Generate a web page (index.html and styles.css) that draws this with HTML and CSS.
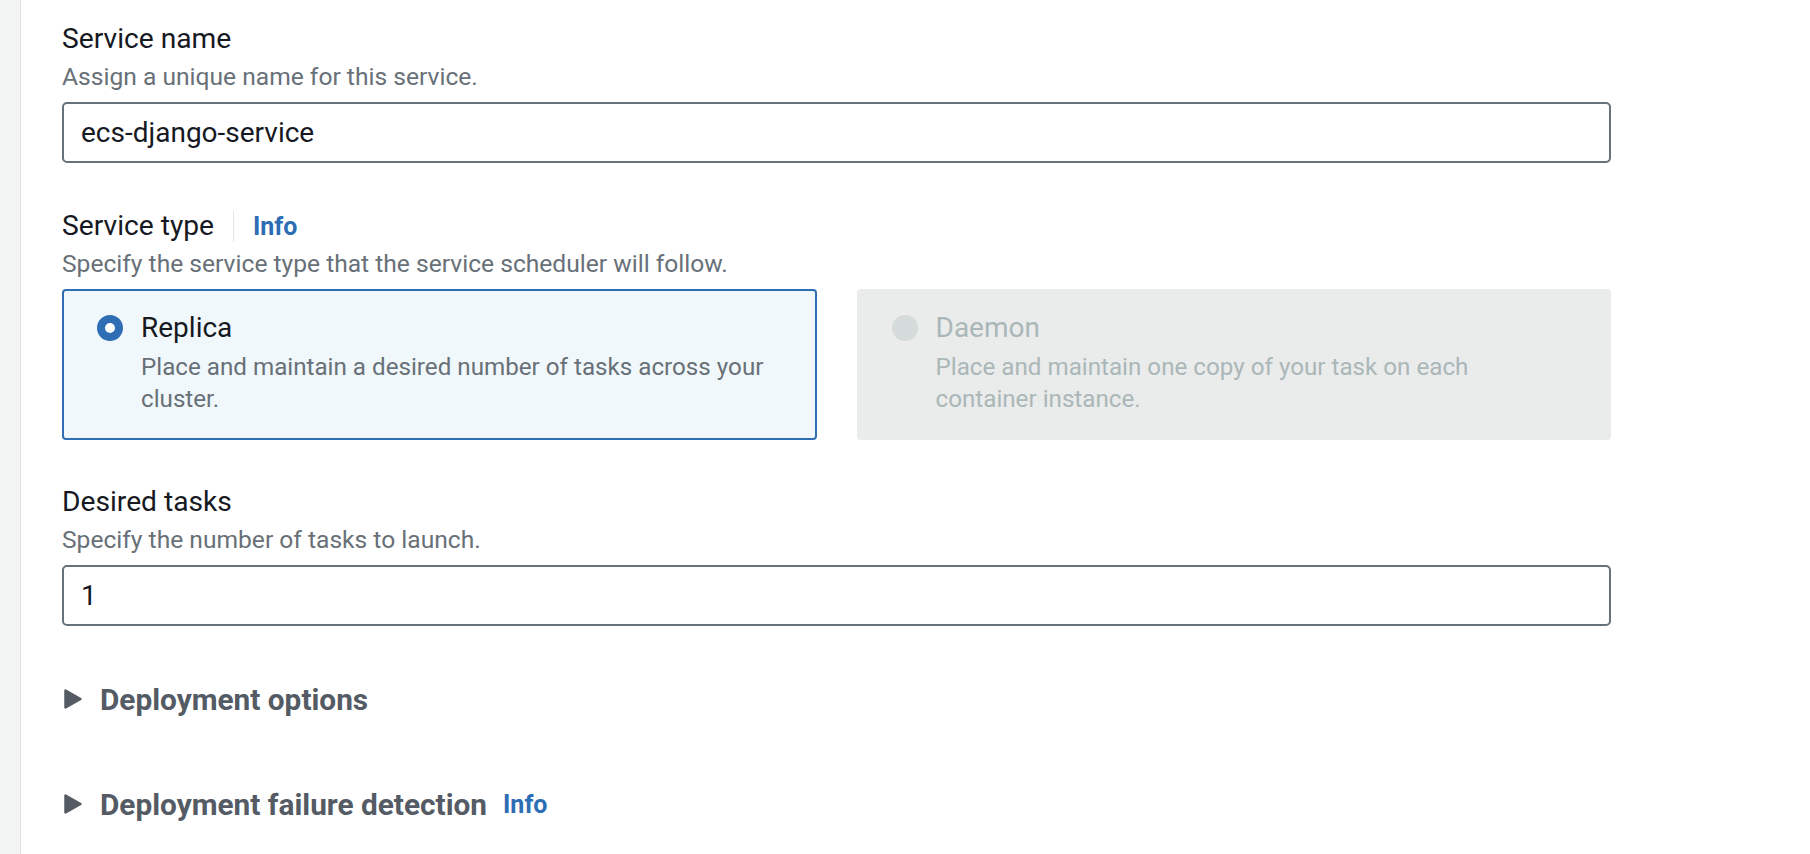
FILE: index.html
```html
<!DOCTYPE html>
<html lang="en">
<head>
<meta charset="utf-8">
<title>Service configuration</title>
<link rel="stylesheet" href="styles.css">
</head>
<body>
<div class="page">
  <div class="rail"></div>
  <main class="form">
    <div class="field">
      <div class="label">Service name</div>
      <div class="desc">Assign a unique name for this service.</div>
      <input class="input" type="text" value="ecs-django-service">
    </div>

    <div class="field">
      <div class="label-row">
        <span class="label">Service type</span>
        <span class="divider"></span>
        <a class="info" href="#">Info</a>
      </div>
      <div class="desc">Specify the service type that the service scheduler will follow.</div>
      <div class="tiles">
        <div class="tile selected">
          <div class="radio-wrap"><span class="radio checked"></span></div>
          <div class="tile-text">
            <div class="tile-label">Replica</div>
            <div class="tile-desc">Place and maintain a desired number of tasks across your cluster.</div>
          </div>
        </div>
        <div class="tile disabled">
          <div class="radio-wrap"><span class="radio"></span></div>
          <div class="tile-text">
            <div class="tile-label">Daemon</div>
            <div class="tile-desc">Place and maintain one copy of your task on each container instance.</div>
          </div>
        </div>
      </div>
    </div>

    <div class="field">
      <div class="label">Desired tasks</div>
      <div class="desc">Specify the number of tasks to launch.</div>
      <input class="input" type="text" value="1">
    </div>

    <div class="expander first">
      <svg class="caret" width="20" height="22" viewBox="0 0 20 22"><path d="M2.5 2.5 L17.5 11 L2.5 19.5 Z" fill="#545b64" stroke="#545b64" stroke-width="2.5" stroke-linejoin="round"/></svg>
      <span class="exp-title">Deployment options</span>
    </div>

    <div class="expander second">
      <svg class="caret" width="20" height="22" viewBox="0 0 20 22"><path d="M2.5 2.5 L17.5 11 L2.5 19.5 Z" fill="#545b64" stroke="#545b64" stroke-width="2.5" stroke-linejoin="round"/></svg>
      <span class="exp-title">Deployment failure detection</span>
      <a class="info exp-info" href="#">Info</a>
    </div>
  </main>
</div>
</body>
</html>
```

FILE: styles.css
```css
* { box-sizing: border-box; }

html, body {
  margin: 0;
  padding: 0;
  background: #ffffff;
  font-family: Roboto, "Liberation Sans", sans-serif;
  color: #16191f;
}

.page {
  display: flex;
  min-height: 854px;
}

.rail {
  width: 21px;
  flex: 0 0 21px;
  background: #f2f3f3;
  border-right: 1px solid #e1e3e4;
}

.form {
  flex: 0 0 auto;
  width: 1549px;
  margin-left: 41px;
  padding-top: 17px;
  display: flex;
  flex-direction: column;
}

.field + .field { margin-top: 40px; }
.field:nth-child(2) { margin-top: 41px; }

.label {
  font-size: 28.2px;
  line-height: 44px;
  color: #16191f;
}

.label-row {
  display: flex;
  align-items: center;
  height: 44px;
}

.divider {
  width: 1px;
  height: 31px;
  background: #e3e6e8;
  margin: 0 19px 0 19px;
}

.info {
  font-size: 25px;
  font-weight: 700;
  color: #2c6db4;
  text-decoration: none;
}

.desc {
  font-size: 24.6px;
  line-height: 32px;
  color: #687078;
}

.input {
  display: block;
  width: 100%;
  height: 61px;
  margin-top: 9px;
  padding: 0 17px;
  border: 2px solid #687078;
  border-radius: 5px;
  font-family: Roboto, "Liberation Sans", sans-serif;
  font-size: 28px;
  color: #16191f;
  background: #ffffff;
  outline: none;
}

.tiles {
  margin-top: 9px;
  display: grid;
  grid-template-columns: 1fr 1fr;
  gap: 40px;
}

.tile {
  display: flex;
  gap: 18px;
  height: 151px;
  padding: 14px 42px 23px 33px;
  border: 2px solid transparent;
  border-radius: 4px;
}

.tile.selected {
  background: #f1f8fc;
  border-color: #2f6eb5;
}

.tile.disabled {
  background: #eaebeb;
  border-color: #eaebeb;
}

.radio-wrap {
  height: 46px;
  display: flex;
  align-items: center;
}

.radio {
  display: block;
  width: 26px;
  height: 26px;
  border-radius: 50%;
  background: #d5dbdb;
}

.radio.checked {
  background: #ffffff;
  border: 8px solid #2f6eb5;
}

.tile-label {
  font-size: 28px;
  line-height: 46px;
  color: #16191f;
}

.tile-desc {
  font-size: 24.2px;
  line-height: 32px;
  color: #687078;
}

.tile.disabled .tile-label,
.tile.disabled .tile-desc {
  color: #aab7b8;
}

.expander {
  display: flex;
  align-items: center;
  height: 44px;
}

.expander.first { margin-top: 51px; }
.expander.second { margin-top: 61px; }

.caret {
  margin-left: 1px;
  margin-right: 17px;
  flex: 0 0 auto;
}

.exp-title {
  font-size: 29.8px;
  font-weight: 700;
  color: #545b64;
}

.exp-info { margin-left: 16px; }
```
